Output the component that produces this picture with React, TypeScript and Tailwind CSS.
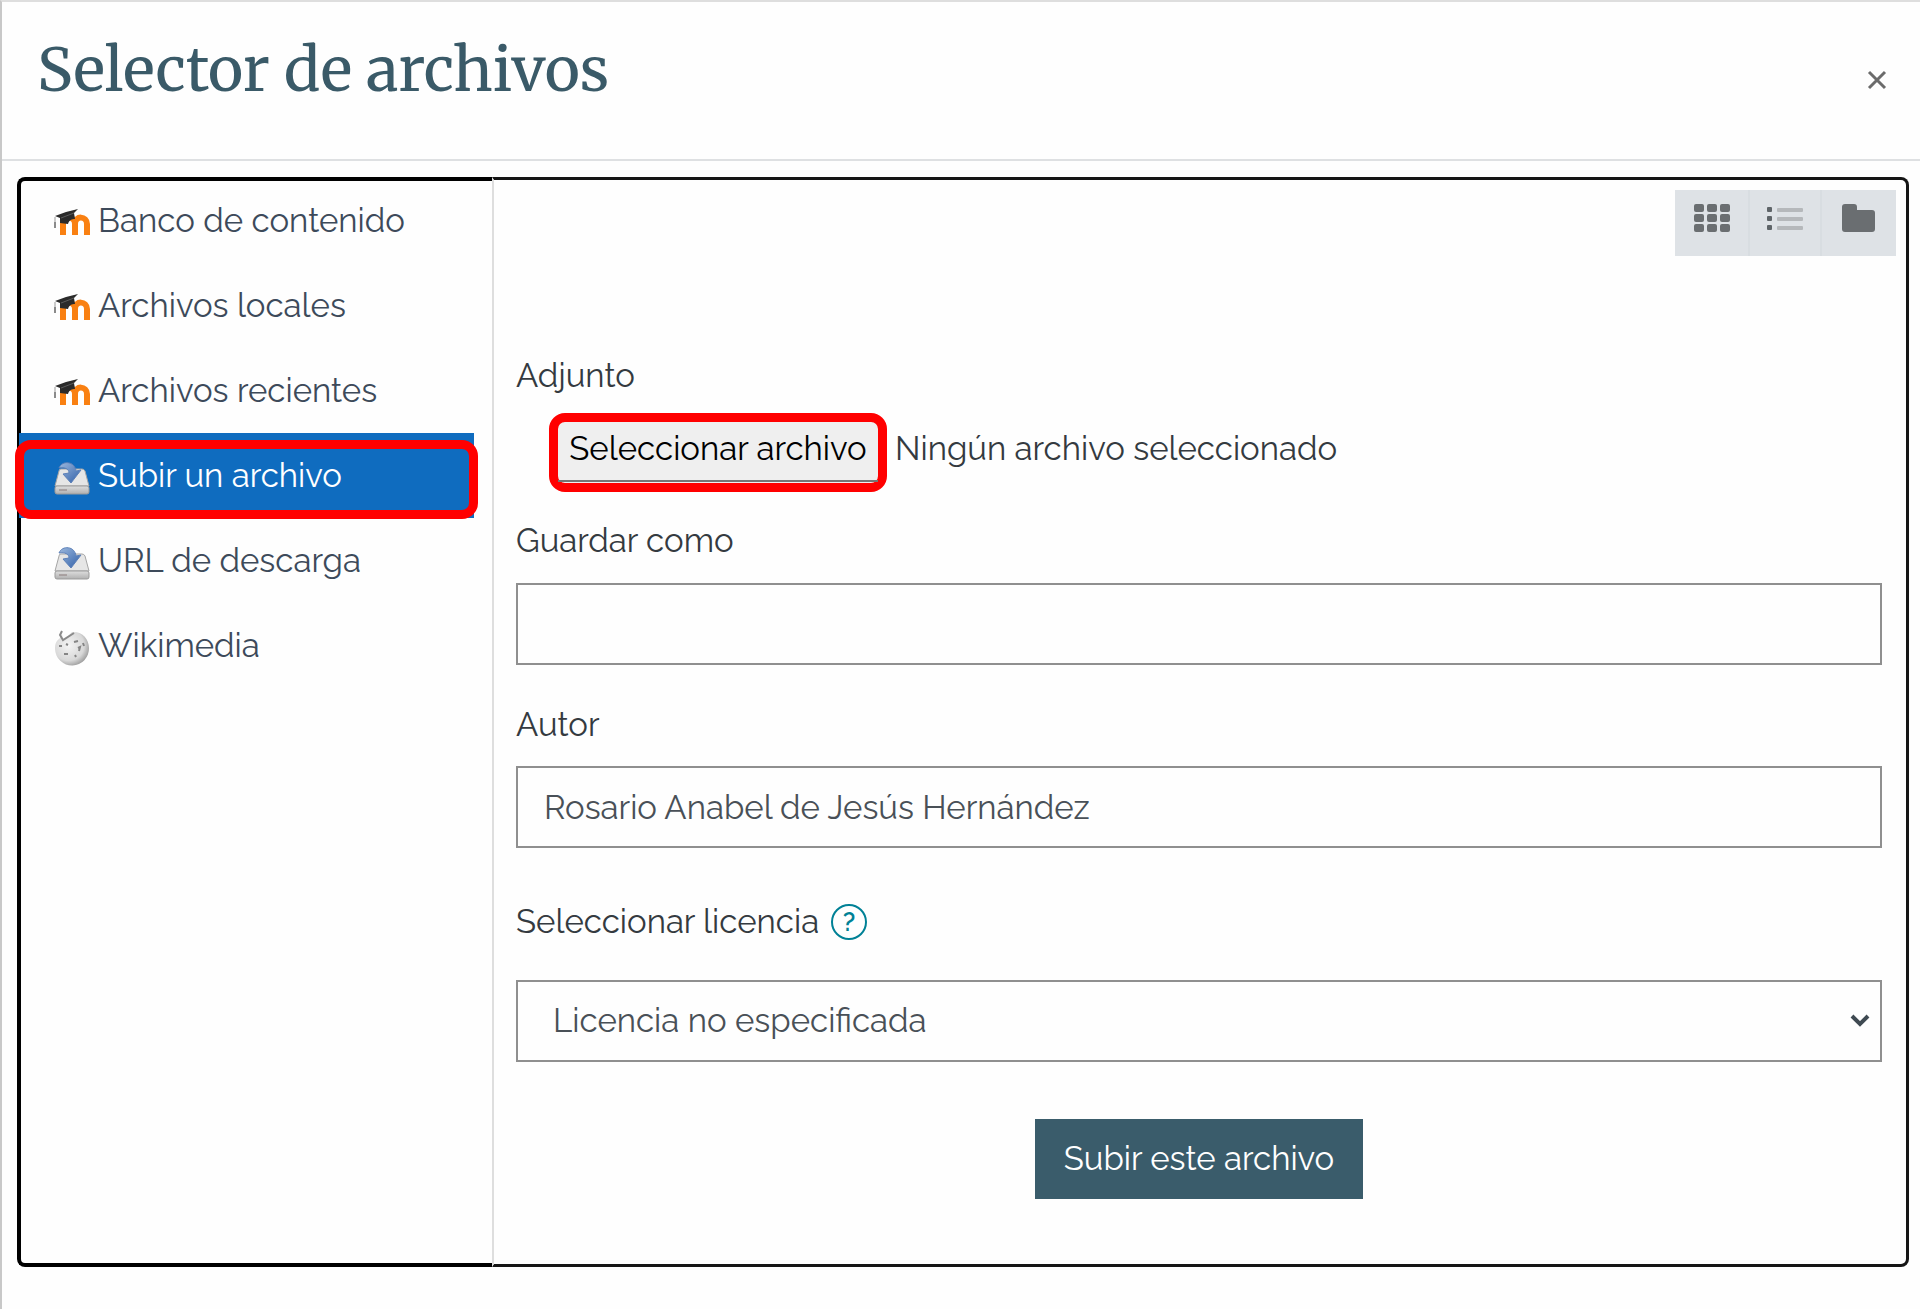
import React, { useRef, useState } from 'react';

type RepoIcon = 'moodle' | 'drive' | 'wiki';

interface Repository {
  id: string;
  name: string;
  icon: RepoIcon;
}

const repositories: Repository[] = [
  { id: 'contentbank', name: 'Banco de contenido', icon: 'moodle' },
  { id: 'local', name: 'Archivos locales', icon: 'moodle' },
  { id: 'recent', name: 'Archivos recientes', icon: 'moodle' },
  { id: 'upload', name: 'Subir un archivo', icon: 'drive' },
  { id: 'url', name: 'URL de descarga', icon: 'drive' },
  { id: 'wikimedia', name: 'Wikimedia', icon: 'wiki' },
];

function MoodleIcon() {
  return (
    <svg viewBox="0 0 36 36" className="mt-2 h-9 w-9 shrink-0" aria-hidden="true">
      <path d="M9 28V16c0-8 12-7 12 1v11M21 17c0-9 12-8 12 0v11" fill="none" stroke="#f98012" strokeWidth="6" />
      <path d="M1 9l11-4 12-3-4 4 1 6c-3 0-6 1-7 5l-8-1V11z" fill="#2b2b2b" />
      <path d="M7 11l13-5" stroke="#5c5c5c" strokeWidth="1" />
      <path d="M1 10v5" stroke="#9a9a9a" strokeWidth="1" />
      <path d="M1 15v6" stroke="#8b8b8b" strokeWidth="2" />
    </svg>
  );
}

function DriveIcon() {
  return (
    <svg viewBox="0 0 36 36" className="mt-2 h-9 w-9 shrink-0" aria-hidden="true">
      <defs>
        <linearGradient id="driveBody" x1="0" y1="0" x2="0" y2="1">
          <stop offset="0" stopColor="#dedede" />
          <stop offset="1" stopColor="#b0b0b0" />
        </linearGradient>
        <linearGradient id="driveArrow" x1="0" y1="0" x2="1" y2="1">
          <stop offset="0" stopColor="#9db9de" />
          <stop offset="1" stopColor="#2f5fa8" />
        </linearGradient>
      </defs>
      <path d="M7 7h21q2 0 3 2l4 15H1L5 9q0-2 2-2z" fill="#e6e6e6" stroke="#a5a5a5" strokeWidth="1" />
      <rect x="1" y="24" width="34" height="8" rx="2" fill="url(#driveBody)" stroke="#9b9b9b" strokeWidth="1" />
      <path d="M5 28h8" stroke="#8a7a7a" strokeWidth="1" />
      <path
        d="M5 6C8-2 21-1 22 9l5-1-10 13-8-9 6-1c0-4-4-6-10-5z"
        fill="url(#driveArrow)"
        stroke="#5c80b8"
        strokeWidth="1"
      />
    </svg>
  );
}

function WikiIcon() {
  return (
    <svg viewBox="0 0 36 36" className="mt-1 h-9 w-9 shrink-0" aria-hidden="true">
      <defs>
        <radialGradient id="globe" cx="0.4" cy="0.4" r="0.65">
          <stop offset="0" stopColor="#f4f4f4" />
          <stop offset="0.7" stopColor="#d8d8d8" />
          <stop offset="1" stopColor="#9a9a9a" />
        </radialGradient>
      </defs>
      <path d="M8 4l1 7 9-9c10-1 17 7 17 16a17 17 0 0 1-34 1c0-5 1-8 5-11z" fill="url(#globe)" />
      <path d="M8 1L6 5l3 5 11-7" fill="none" stroke="#8a8a8a" strokeWidth="2" />
      <path
        d="M5 16h3M12 14l2 1M20 12l4-1M24 18l2-1-1 4M10 24h4M21 25l1 2M29 13l1 3"
        fill="none"
        stroke="#858585"
        strokeWidth="2"
      />
    </svg>
  );
}

function RepositoryIcon({ icon }: { icon: RepoIcon }) {
  if (icon === 'moodle') return <MoodleIcon />;
  if (icon === 'drive') return <DriveIcon />;
  return <WikiIcon />;
}

function ViewButtons() {
  return (
    <div className="flex">
      <button type="button" aria-label="Iconos" className="flex h-[66px] w-[73px] justify-center bg-[#dee2e6] pt-3">
        <svg viewBox="0 0 38 32" className="h-8 w-[38px]" fill="#6a6e71" aria-hidden="true">
          {[2, 12, 22].map((y) =>
            [1, 14, 27].map((x) => <rect key={`${x}-${y}`} x={x} y={y} width="10" height="8" rx="2" />)
          )}
        </svg>
      </button>
      <button
        type="button"
        aria-label="Lista"
        className="flex h-[66px] w-[74px] justify-center border-x-2 border-[#d8dde1] bg-[#dee2e6] pt-3"
      >
        <svg viewBox="0 0 38 32" className="h-8 w-[38px]" aria-hidden="true">
          {[6, 15, 24].map((y) => (
            <g key={y}>
              <rect x="1" y={y - 1} width="5" height="5" rx="1" fill="#5f6569" />
              <rect x="11" y={y} width="26" height="4" rx="1" fill="#b5b8bb" />
            </g>
          ))}
        </svg>
      </button>
      <button type="button" aria-label="Carpetas" className="flex h-[66px] w-[74px] justify-center bg-[#dee2e6] pt-3">
        <svg viewBox="0 0 38 32" className="h-8 w-[38px]" aria-hidden="true">
          <path
            d="M2 5a3 3 0 0 1 3-3h9a3 3 0 0 1 3 3v3h15a3 3 0 0 1 3 3v16a3 3 0 0 1-3 3H5a3 3 0 0 1-3-3z"
            fill="#6a6e71"
          />
        </svg>
      </button>
    </div>
  );
}

export default function App() {
  const [activeRepo, setActiveRepo] = useState('upload');
  const [fileName, setFileName] = useState('');
  const [saveAs, setSaveAs] = useState('');
  const [author, setAuthor] = useState('Rosario Anabel de Jesús Hernández');
  const fileRef = useRef<HTMLInputElement>(null);

  return (
    <div className="min-h-screen border-t-2 border-l-2 border-t-[#dedede] border-l-[#c8c8c8] bg-[#fefefe] font-['Raleway','Lato',sans-serif] text-[33px] leading-10 text-[#343a40]">
      <header className="flex h-[159px] items-start justify-between border-b-2 border-[#dee0e2] pt-7 pr-[29px] pl-[35px]">
        <h1 className="font-['Merriweather','DejaVu_Serif_Condensed','DejaVu_Serif',serif] text-[60px] leading-[80px] text-[#3a5a68]">
          Selector de archivos
        </h1>
        <button type="button" aria-label="Cerrar" className="mt-9 p-1 text-[#6b6b6b]">
          <svg viewBox="0 0 20 20" className="h-5 w-5" aria-hidden="true">
            <path d="M2 2l16 16M18 2L2 18" stroke="currentColor" strokeWidth="3" />
          </svg>
        </button>
      </header>

      <main className="flex pt-4 pr-[11px] pb-10 pl-[15px]">
        <nav className="w-[475px] shrink-0 rounded-l-lg border-4 border-r-0 border-black">
          <ul className="-mt-[3px] -ml-0.5">
            {repositories.map((repo) => {
              const active = repo.id === activeRepo;
              return (
                <li key={repo.id} className="relative mr-[18px]">
                  <a
                    href={`#${repo.id}`}
                    onClick={() => setActiveRepo(repo.id)}
                    className={`flex h-[85px] items-center gap-2 pl-[35px] ${active ? 'bg-[#0f6cbf] text-white' : 'text-[#3d4a5a]'}`}
                  >
                    <RepositoryIcon icon={repo.icon} />
                    {repo.name}
                  </a>
                  {active && (
                    <span className="pointer-events-none absolute top-[7px] -right-1 -bottom-px -left-1 rounded-2xl border-9 border-[#ff0000]" />
                  )}
                </li>
              );
            })}
          </ul>
        </nav>

        <section className="min-w-0 grow rounded-r-lg border-3 border-l-2 border-[#151515] border-l-[#dedede] pb-[65px]">
          <div className="flex justify-end pt-[10px] pr-[10px]">
            <ViewButtons />
          </div>

          <form className="flex flex-col pt-[100px] pr-6 pl-[22px]" onSubmit={(e) => e.preventDefault()}>
            <label htmlFor="adjunto">Adjunto</label>
            <div className="mt-[17px] flex items-start gap-2 pl-[33px]">
              <input
                ref={fileRef}
                id="adjunto"
                type="file"
                className="hidden"
                onChange={(e) => setFileName(e.target.files?.[0]?.name ?? '')}
              />
              <button
                type="button"
                onClick={() => fileRef.current?.click()}
                className="h-[79px] w-[338px] rounded-2xl border-9 border-[#ff0000] bg-[#efefef] text-black"
              >
                <span className="flex h-[59px] justify-center border-b-2 border-[#767676] pt-[6px]">
                  Seleccionar archivo
                </span>
              </button>
              <span className="pt-4">{fileName || 'Ningún archivo seleccionado'}</span>
            </div>

            <label htmlFor="guardar" className="mt-[29px]">
              Guardar como
            </label>
            <input
              id="guardar"
              type="text"
              value={saveAs}
              onChange={(e) => setSaveAs(e.target.value)}
              className="mt-[22px] h-[82px] border-2 border-[#8f8f8f] px-[26px] text-[#495057]"
            />

            <label htmlFor="autor" className="mt-10">
              Autor
            </label>
            <input
              id="autor"
              type="text"
              value={author}
              onChange={(e) => setAuthor(e.target.value)}
              className="mt-[21px] h-[82px] border-2 border-[#8f8f8f] px-[26px] text-[#495057]"
            />

            <div className="mt-[54px] flex items-center gap-3">
              <label htmlFor="licencia">Seleccionar licencia</label>
              <button
                type="button"
                aria-label="Ayuda"
                className="flex h-9 w-9 items-center justify-center rounded-full border-2 border-[#008196] text-[26px] font-semibold text-[#008196]"
              >
                ?
              </button>
            </div>
            <div className="relative mt-[38px]">
              <select
                id="licencia"
                className="h-[82px] w-full appearance-none border-2 border-[#8f8f8f] bg-transparent px-[35px] text-[#495057]"
              >
                <option>Licencia no especificada</option>
              </select>
              <svg viewBox="0 0 20 14" className="pointer-events-none absolute top-[34px] right-3 h-[14px] w-5" aria-hidden="true">
                <path d="M2 2l8 8 8-8" fill="none" stroke="#3f4a52" strokeWidth="4" />
              </svg>
            </div>

            <button type="submit" className="mt-[57px] h-20 self-center bg-[#3a5c6b] px-[29px] text-white">
              Subir este archivo
            </button>
          </form>
        </section>
      </main>
    </div>
  );
}
